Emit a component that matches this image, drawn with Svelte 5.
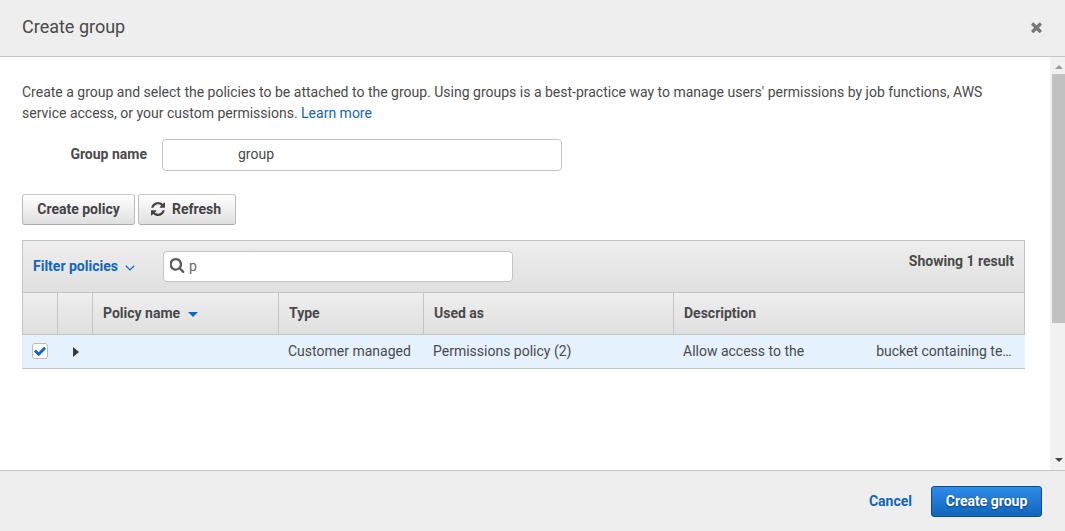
<script>
  let checked = $state(true);
  let groupName = 'group';
  let query = 'p';
</script>

<div class="dialog">
  <header>
    <h1>Create group</h1>
    <svg class="close" viewBox="302 302 1188 1252" aria-label="Close"><path d="M1490 1322q0 40-28 68l-136 136q-28 28-68 28t-68-28l-294-294-294 294q-28 28-68 28t-68-28l-136-136q-28-28-28-68t28-68l294-294-294-294q-28-28-28-68t28-68l136-136q28-28 68-28t68 28l294 294 294-294q28-28 68-28t68 28l136 136q28 28 28 68t-28 68l-294 294 294 294q28 28 28 68z" /></svg>
  </header>

  <div class="middle">
    <main>
      <p class="intro">
        Create a group and select the policies to be attached to the group. Using groups is a best-practice way to manage users' permissions by job functions, AWS service access, or your custom permissions. <span class="link">Learn more</span>
      </p>
      <div class="field">
        <span class="label">Group name</span>
        <div class="input name">{groupName}</div>
      </div>
      <div class="actions">
        <button class="btn">Create policy</button>
        <button class="btn refresh">
          <svg viewBox="128 128 1536 1536"><path d="M1639 1056q0 5-1 7-64 268-268 434.500t-478 166.500q-146 0-282.500-55t-243.500-157l-129 129q-19 19-45 19t-45-19-19-45v-448q0-26 19-45t45-19h448q26 0 45 19t19 45-19 45l-137 137q71 66 161 102t187 36q134 0 250-65t186-179q11-17 53-117 8-23 30-23h192q13 0 22.500 9.500t9.500 22.500zm25-800v448q0 26-19 45t-45 19h-448q-26 0-45-19t-19-45 19-45l138-138q-148-137-349-137-134 0-250 65t-186 179q-11 17-53 117-8 23-30 23h-199q-13 0-22.500-9.500t-9.500-22.500v-7q65-268 270-434.500t480-166.500q146 0 284 55.500t245 156.500l130-129q19-19 45-19t45 19 19 45z" /></svg>
          Refresh
        </button>
      </div>

      <div class="table">
        <div class="toolbar">
          <span class="filter">Filter policies
            <svg viewBox="0 0 10 6"><path d="M.8.8 5 4.900 9.200.8" /></svg>
          </span>
          <div class="input search">
            <svg viewBox="128 128 1664 1664"><path d="M1216 832q0-185-131.500-316.500t-316.500-131.500-316.500 131.500-131.500 316.500 131.500 316.500 316.500 131.500 316.500-131.500 131.500-316.500zm512 832q0 52-38 90t-90 38q-54 0-90-38l-343-342q-179 124-399 124-143 0-273.500-55.500t-225-150-150-225-55.500-273.500 55.500-273.500 150-225 225-150 273.500-55.500 273.500 55.500 225 150 150 225 55.500 273.500q0 220-124 399l343 343q37 37 37 90z" /></svg>
            <span>{query}</span>
          </div>
          <span class="count">Showing 1 result</span>
        </div>
        <div class="row head">
          <div></div>
          <div></div>
          <div>Policy name <i class="sort"></i></div>
          <div>Type</div>
          <div>Used as</div>
          <div>Description</div>
        </div>
        <div class="row item">
          <div class="pick">
            <button class="check" role="checkbox" aria-checked={checked} aria-label="Select policy" onclick={() => (checked = !checked)}>
              {#if checked}
                <svg viewBox="121 334 1550 1188"><path d="M1671 566q0 40-28 68l-724 724-136 136q-28 28-68 28t-68-28l-136-136-362-362q-28-28-28-68t28-68l136-136q28-28 68-28t68 28l294 295 656-657q28-28 68-28t68 28l136 136q28 28 28 68z" /></svg>
              {/if}
            </button>
          </div>
          <div class="expand"><i></i></div>
          <div></div>
          <div>Customer managed</div>
          <div>Permissions policy (2)</div>
          <div class="desc"><span>Allow access to the</span><span>bucket containing te…</span></div>
        </div>
      </div>
    </main>
    <div class="scroll">
      <i class="up"></i>
      <div class="thumb"></div>
      <i class="down"></i>
    </div>
  </div>

  <footer>
    <span class="cancel">Cancel</span>
    <button class="primary">Create group</button>
  </footer>
</div>

<style>
  :global(body) { margin: 0; overflow: hidden; }
  * { box-sizing: border-box; }
  .dialog {
    width: 1065px;
    height: 531px;
    display: flex;
    flex-direction: column;
    background: #fff;
    color: #4a4a4a;
    font: 14px/21px Roboto, sans-serif;
  }
  header {
    height: 57px;
    flex: none;
    display: flex;
    justify-content: space-between;
    align-items: center;
    padding: 0 23px 2px 22px;
    background: #eee;
    border-bottom: 1px solid #c4c4c4;
  }
  h1 { margin: 0; font-size: 18px; font-weight: 400; line-height: 24px; }
  .close { width: 11px; height: 11px; fill: #777; }
  .middle { flex: 1; min-height: 0; display: flex; }
  main { flex: 1; min-width: 0; padding: 25px 25px 0 22px; }
  .intro { margin: 0; }
  .link { color: #1166bb; }
  .field { display: flex; align-items: center; margin-top: 15px; }
  .label { width: 140px; padding: 0 15px 2px 0; text-align: right; font-weight: 700; }
  .input { background: #fff; border: 1px solid #c4c4c4; border-radius: 4px; }
  .name { width: 400px; height: 32px; padding: 4px 0 0 75px; }
  .actions { display: flex; gap: 3px; margin-top: 23px; }
  button { font: inherit; margin: 0; padding: 0; }
  .btn {
    height: 31px;
    width: 113px;
    display: flex;
    align-items: center;
    justify-content: center;
    font-weight: 700;
    color: #444;
    background: linear-gradient(#fff, #e0e0e0);
    border: 1px solid #bbb;
    border-top-color: #c8c8c8;
    border-bottom-color: #aaa;
    border-radius: 3px;
  }
  .refresh { width: 98px; gap: 7px; padding-right: 2px; }
  .refresh svg { width: 14px; height: 14px; margin-top: -1px; fill: #444; }
  .table { width: 1003px; margin-top: 15px; }
  .toolbar {
    height: 52px;
    display: flex;
    align-items: center;
    padding: 0 10px;
    border: 1px solid #c4c4c4;
    border-bottom: 0;
    background: linear-gradient(#eee, #e0e0e0);
  }
  .filter { width: 130px; font-weight: 700; color: #1166bb; display: flex; align-items: center; gap: 7px; }
  .filter svg { width: 10px; height: 6px; margin-top: 3px; fill: none; stroke: #1166bb; stroke-width: 1.3; }
  .search { width: 350px; height: 31px; display: flex; align-items: center; padding-left: 6px; gap: 4px; color: #666; }
  .search svg { width: 15px; height: 15px; margin-top: -3px; fill: #5a5a5a; }
  .count { margin-left: auto; font-weight: 700; padding-bottom: 10px; }
  .row { display: grid; grid-template-columns: 35px 35px 186px 145px 250px 1fr; }
  .row > div { display: flex; align-items: center; padding-left: 10px; border-left: 1px solid transparent; white-space: nowrap; }
  .head {
    height: 43px;
    font-weight: 700;
    border-top: 1px solid #c4c4c4;
    border-bottom: 1px solid #c4c4c4;
    border-right: 1px solid #c4c4c4;
    background: linear-gradient(#eee, #e0e0e0);
  }
  .head > div { border-left-color: #c4c4c4; }
  .sort { margin-left: 8px; margin-top: 2px; border: 5px solid transparent; border-top-color: #1166bb; border-bottom: 0; }
  .item { height: 34px; background: #e5f1fd; border-bottom: 1px solid #c4c4c4; }
  .item > div { padding-left: 9px; }
  .item .pick { padding-bottom: 1px; }
  .item .expand { padding-left: 15px; }
  .expand i { border: 5px solid transparent; border-left: 6px solid #3a3a3a; border-right: 0; }
  .check {
    width: 16px;
    height: 16px;
    display: grid;
    place-items: center;
    background: #fff;
    border: 1px solid #bbb;
    border-radius: 3px;
  }
  .check svg { width: 12px; height: 9px; fill: #1166bb; }
  .desc { gap: 72px; }
  .scroll { width: 15px; display: flex; flex-direction: column; align-items: center; background: #f1f1f1; }
  .up { margin: 8px 0 5px 2px; border: 4px solid transparent; border-bottom-color: #999; border-top: 0; }
  .thumb { width: 13px; height: 249px; align-self: flex-end; background: #c1c1c1; }
  .down { margin: auto 0 8px 2px; border: 4px solid transparent; border-top-color: #444; border-bottom: 0; }
  footer {
    height: 61px;
    flex: none;
    display: flex;
    align-items: center;
    justify-content: flex-end;
    gap: 19px;
    padding-right: 23px;
    background: #eee;
    border-top: 1px solid #c4c4c4;
  }
  .cancel { font-weight: 700; color: #1166bb; }
  .primary {
    width: 111px;
    height: 31px;
    font-weight: 700;
    color: #fff;
    text-shadow: 0 1px 2px #0a3a70;
    background: linear-gradient(#2e8cea, #1166bb);
    border: 1px solid #0f4a87;
    border-radius: 3px;
  }
</style>
